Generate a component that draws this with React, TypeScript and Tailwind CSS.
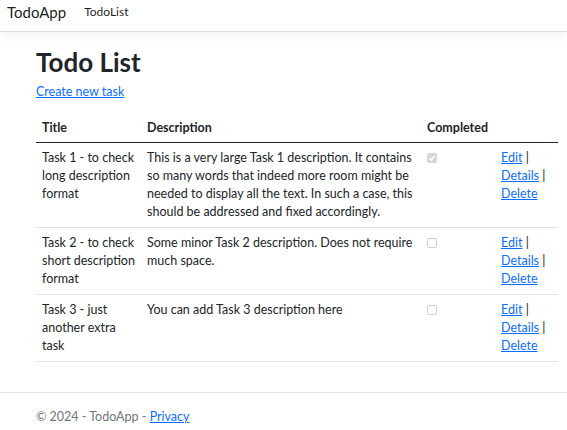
import React from 'react';

const font = { fontFamily: 'Lato, "Noto Sans", "Liberation Sans", sans-serif' };

type Task = { title: string; description: string; done: boolean };

const tasks: Task[] = [
    {
        title: 'Task 1 - to check long description format',
        description:
            'This is a very large Task 1 description. It contains so many words that indeed more room might be needed to display all the text. In such a case, this should be addressed and fixed accordingly.',
        done: true,
    },
    {
        title: 'Task 2 - to check short description format',
        description: 'Some minor Task 2 description. Does not require much space.',
        done: false,
    },
    {
        title: 'Task 3 - just another extra task',
        description: 'You can add Task 3 description here',
        done: false,
    },
];

const Checkbox = ({ checked }: { checked: boolean }) =>
    checked ? (
        <span className="mt-[4px] flex h-[10px] w-[10px] items-center justify-center rounded-[2px] bg-[#d7d7d7]">
            <svg width="8" height="8" viewBox="0 0 8 8">
                <path d="M1.3 4.2 L3.2 6 L6.7 2" fill="none" stroke="#fff" strokeWidth="1.4" />
            </svg>
        </span>
    ) : (
        <span className="mt-[4px] block h-[10px] w-[10px] rounded-[2px] border border-[#cfcfcf] bg-white" />
    );

const App = () => {
    return (
        <div className="min-h-[430px] bg-white text-[12.5px] leading-[18px] text-[#212529]" style={font}>
            {/* Navbar */}
            <nav className="flex h-[32px] items-start border-b border-[#dcdcdc] bg-white px-[7px] pt-[2px] shadow-[0_4px_10px_rgba(0,0,0,0.05)]">
                <span className="text-[15px] leading-[20px] text-[#000000e6]">TodoApp</span>
                <span className="ml-[18px] text-[12px] leading-[20px] text-[#000000e6]">TodoList</span>
            </nav>

            {/* Main */}
            <main className="pl-[36px] pr-[9px] pb-[30px]">
                <h1 className="mt-[13px] text-[26px] font-bold leading-[34px]">Todo List</h1>
                <a href="#" className="mt-[4px] inline-block text-[#0d6efd] underline">
                    Create new task
                </a>

                <table className="mt-[12px] w-full table-fixed border-collapse">
                    <colgroup>
                        <col className="w-[105px]" />
                        <col className="w-[280px]" />
                        <col className="w-[74px]" />
                        <col />
                    </colgroup>
                    <thead>
                        <tr className="border-b border-[#212529]">
                            <th className="px-[6px] pt-[6px] pb-[5px] text-left font-bold">Title</th>
                            <th className="px-[6px] pt-[6px] pb-[5px] text-left font-bold">Description</th>
                            <th className="px-[6px] pt-[6px] pb-[5px] text-left font-bold">Completed</th>
                            <th className="px-[6px] pt-[6px] pb-[5px]"></th>
                        </tr>
                    </thead>
                    <tbody>
                        {tasks.map((t) => (
                            <tr key={t.title} className="border-b border-[#dee2e6] align-top">
                                <td className="px-[6px] py-[6px]">{t.title}</td>
                                <td className="px-[6px] py-[6px]">{t.description}</td>
                                <td className="px-[6px] py-[6px]">
                                    <Checkbox checked={t.done} />
                                </td>
                                <td className="px-[6px] py-[6px]">
                                    <a href="#" className="text-[#0d6efd] underline">Edit</a> |
                                    <br />
                                    <a href="#" className="text-[#0d6efd] underline">Details</a> |
                                    <br />
                                    <a href="#" className="text-[#0d6efd] underline">Delete</a>
                                </td>
                            </tr>
                        ))}
                    </tbody>
                </table>
            </main>

            {/* Footer */}
            <footer className="border-t border-[#e5e5e5] pl-[36px] pt-[15px] text-[#6c757d]">
                © 2024 - TodoApp - <a href="#" className="text-[#0d6efd] underline">Privacy</a>
            </footer>
        </div>
    );
};

export default App;
